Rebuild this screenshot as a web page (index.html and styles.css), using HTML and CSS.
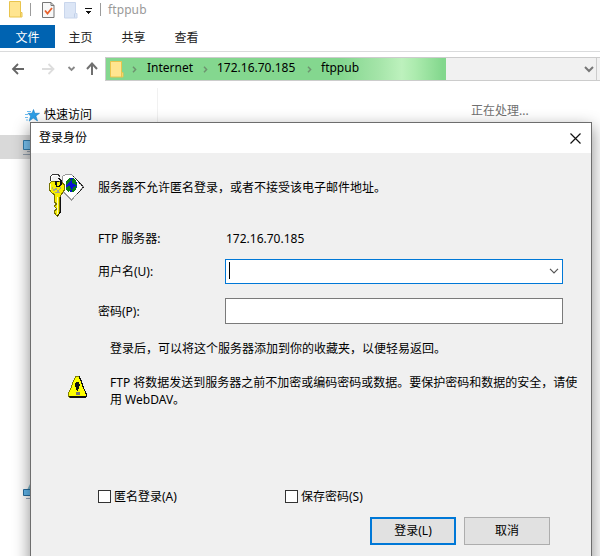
FILE: index.html
```html
<!DOCTYPE html>
<html lang="zh-CN">
<head>
<meta charset="utf-8">
<title>ftppub</title>
<link rel="stylesheet" href="styles.css">
</head>
<body>
<div class="window">
  <header class="titlebar">
    <svg class="folder" width="14" height="17" viewBox="0 0 14 17"><path d="M.5.5h11v11h1.500v4.500H.5z" fill="#ffe590" stroke="#e9c44d"/><path d="M11.500 11.500v4.500" stroke="#e9c44d" fill="none"/></svg>
    <i class="sep sep-a"></i>
    <svg class="props" width="13" height="16" viewBox="0 0 13 16"><path d="M.5.5h8.500l3 3v12H.5z" fill="#f8f8f8" stroke="#777"/><path d="M9 .5v3h3" fill="none" stroke="#777"/><path d="M3 8.500l2.500 3L10 6" fill="none" stroke="#e8612c" stroke-width="1.800"/></svg>
    <svg class="newfolder" width="14" height="17" viewBox="0 0 14 17"><path d="M.5.5h11v11h1.500v4.500H.5z" fill="#dce6f6" stroke="#c9d6ec"/><path d="M10.500 11.500v4" stroke="#c0cfe8" fill="none"/></svg>
    <svg class="qat" width="7" height="6" viewBox="0 0 7 6" shape-rendering="crispEdges"><path d="M0 0h7v1H0zM0 3h7L3.500 6z" fill="#111"/></svg>
    <i class="sep sep-b"></i>
    <span class="title">ftppub</span>
  </header>
  <nav class="tabs">
    <span class="tab file">文件</span><span class="tab">主页</span><span class="tab">共享</span><span class="tab">查看</span>
  </nav>
  <div class="navbar">
    <svg class="arrows" width="78" height="20" viewBox="0 0 78 20" fill="none" stroke-width="1.800"><path d="M24 10H13M18 5l-5 5 5 5" stroke="#666"/><path d="M42 10h11M48.500 5l5 5-5 5" stroke="#ddd"/><path d="M68.500 8l3 3 3-3" stroke="#888"/></svg>
    <svg class="up" width="12" height="14" viewBox="0 0 12 14" fill="none" stroke="#707070" stroke-width="2"><path d="M6 13V2M1 7l5-5.500L11 7"/></svg>
    <div class="address">
      <div class="progress">
        <svg class="folder" width="14" height="17" viewBox="0 0 14 17"><path d="M.5.5h11v11h1.500v4.500H.5z" fill="#ffe590" stroke="#e9c44d"/><path d="M11.500 11.500v4.500" stroke="#e9c44d" fill="none"/></svg>
        <svg class="chev c1" width="5" height="7" viewBox="0 0 5 7"><path d="M1 .8l2.600 2.700L1 6.200"/></svg>
        <span class="crumb internet">Internet</span>
        <svg class="chev c2" width="5" height="7" viewBox="0 0 5 7"><path d="M1 .8l2.600 2.700L1 6.200"/></svg>
        <span class="crumb host">172.16.70.185</span>
        <svg class="chev c3" width="5" height="7" viewBox="0 0 5 7"><path d="M1 .8l2.600 2.700L1 6.200"/></svg>
        <span class="crumb">ftppub</span>
      </div>
      <svg class="drop" width="10" height="7" viewBox="0 0 10 7" fill="none" stroke="#777" stroke-width="2"><path d="M1 1l4 4 4-4"/></svg>
    </div>
  </div>
  <div class="content">
    <aside class="tree">
      <div class="node quick">
        <svg width="15" height="13" viewBox="0 0 15 13"><path d="M8.500.5l1.300 3.800h4.700l-3.600 2.600 1.600 5-4.300-2.800-4 3 1.400-5L3 4.300h4z" fill="#2d9fe8" stroke="#1682ca" stroke-width=".6"/><path d="M2 2.500h4M0 5.500h3M0 8.500h3M1 11h2" stroke="#6cbcf0"/></svg>
        <span>快速访问</span>
      </div>
      <div class="node selected">
        <svg width="18" height="17" viewBox="0 0 18 17"><path d="M.5 1.500h17v9H.5z" fill="#79c4f3" stroke="#337dac"/><path d="M4 12.500h9M0 15.500h18" stroke="#8e9caa"/></svg>
      </div>
      <div class="node network">
        <svg width="18" height="15" viewBox="0 0 18 15"><path d="M7 0v5H4.500z" fill="#82b9cc"/><path d="M.5 5.500h16v6H.5z" fill="#62b8ee" stroke="#286e9e"/><path d="M3 14.500h12" stroke="#9aabc0"/></svg>
      </div>
    </aside>
    <main class="pane">正在处理...</main>
  </div>
</div>

<section class="dialog">
  <div class="caption"><span>登录身份</span>
    <svg width="11" height="11" viewBox="0 0 11 11"><path d="M.5.5l10 10M10.500.5l-10 10" stroke="#111" stroke-width="1.200"/></svg>
  </div>
  <div class="body">
    <div class="intro">
      <svg class="key" width="37" height="44" viewBox="0 0 37 44" shape-rendering="crispEdges">
        <path d="M14.500 3.500l3-2h6l12 12.500-12 13-8-8z" fill="#fff" stroke="#999"/>
        <path d="M25 3l10.500 11-6 7" fill="none" stroke="#222" stroke-dasharray="2 1"/>
        <ellipse cx="23.500" cy="12" rx="5.500" ry="7" fill="#0a12cf"/>
        <path d="M18 8l4-3 1 2-3 4-2 1zM25 5l3 3 1 4-4-1-1-3zM18 14l4-1 1 3-2 3-3-2zM25 14l4-1-2 5-3 1z" fill="#087d14"/>
        <path d="M2.500 8V4l2-2.500h5.500l2 2" fill="none" stroke="#333"/>
        <path d="M3.500 8V4l2-1.500h4" fill="none" stroke="#fff"/>
        <path d="M4 8.500h9l3 3v6l-3.500 5v17l-3 3.500H9l-2.500-3v-2l2-2-2-3 2-2-2-2v-7l-4-3.500-1.500-3v-5z" fill="#f8ee00" stroke="#777200"/>
        <path d="M2.500 11v6M9.500 24v17" stroke="#ffffb0"/>
        <path d="M11.500 24v15" stroke="#807800" fill="none"/>
        <path d="M12.500 24v15l-3 4" stroke="#111" fill="none"/>
        <path d="M4 14.500l2 3 2-2 2 3 3-4M7 19.500h5" stroke="#a5a58a" fill="none"/>
        <path d="M9.500 5.500h2l1.500 2v4l-1.500 2H9l-1-2v-3h3" fill="none" stroke="#111" stroke-width="1.500"/>
      </svg>
      <p>服务器不允许匿名登录，或者不接受该电子邮件地址。</p>
    </div>
    <div class="form">
      <span class="server-label">FTP 服务器:</span><span class="server">172.16.70.185</span>
      <label>用户名(U):</label>
      <div class="input combo"><i class="caret"></i><svg width="10" height="6" viewBox="0 0 10 6"><path d="M1 .8l4 4 4-4" fill="none" stroke="#555" stroke-width="1.200"/></svg></div>
      <label>密码(P):</label><div class="input password"></div>
    </div>
    <p class="hint">登录后，可以将这个服务器添加到你的收藏夹，以便轻易返回。</p>
    <div class="warning">
      <svg width="19" height="23" viewBox="0 0 19 23" shape-rendering="crispEdges"><path d="M8 .5h3l2 4 2 6 3 7v3l-2 1H2l-1.500-1v-3l3-7 2-6z" fill="#ff0" stroke="#807f00"/><path d="M11 .5l2 4 2 6 3 7v3l-2 1" fill="none" stroke="#111"/><path d="M1 20h17v2H2z" fill="#111"/><path d="M8 6h3l1 3-1 3-1 3H9l-1-3-1-3z" fill="#111"/><path d="M8 16h4v3H8z" fill="#777"/></svg>
      <p>FTP 将数据发送到服务器之前不加密或编码密码或数据。要保护密码和数据的安全，请使用 WebDAV。</p>
    </div>
    <div class="checks"><label><i class="box"></i>匿名登录(A)</label><label><i class="box"></i>保存密码(S)</label></div>
    <div class="buttons"><button class="primary">登录(L)</button><button>取消</button></div>
  </div>
</section>
</body>
</html>
```

FILE: styles.css
```css
* { box-sizing: border-box; }
body { margin: 0; width: 600px; height: 556px; overflow: hidden; background: #fff; color: #000; font: 12px/16px "Noto Sans", "Noto Sans CJK SC", sans-serif; position: relative; }
p { margin: 0; }
svg { display: block; flex: none; }
.window { height: 556px; display: flex; flex-direction: column; }
.titlebar { height: 25px; display: flex; align-items: flex-start; padding: 1px 0 0 9px; }
.sep { width: 1px; height: 13px; margin-top: 2px; background: #9b9b9b; }
.sep-a { margin-left: 7px; }
.props { margin: 1px 0 0 11px; }
.newfolder { margin: 1px 0 0 9px; }
.qat { margin: 7px 0 0 7px; }
.sep-b { margin-left: 8px; }
.title { color: #999; margin-left: 7px; line-height: 17px; letter-spacing: .1px; }
.tabs { height: 27px; display: flex; border-bottom: 1px solid #dadbdc; }
.tab { width: 53px; height: 23px; line-height: 25px; text-align: center; color: #222; }
.tab.file { width: 55px; margin-right: -1px; background: #0063b1; color: #fff; }
.navbar { height: 36px; display: flex; padding-top: 5px; }
.arrows { margin: 2px 8px 0 0; }
.up { margin: 5px 0 0; }
.address { flex: 1; height: 24px; margin-left: 7px; border: 1px solid #ccc; border-right: 0; background: #f1f1f1; display: flex; }
.progress { width: 340px; display: flex; align-items: center; padding-left: 4px; background: linear-gradient(90deg, #84d78f 0 69%, #a4e4a8 80%, #bdf1bd 87%, #acebae 91%, #83d78d 99%); white-space: nowrap; }
.crumb { margin-top: -2px; }
.chev { fill: none; stroke: #6d936f; stroke-width: 1.500; }
.c1 { margin: 0 10px 0 8px; }
.internet { width: 45px; }
.c2 { margin: 0 9px 0 11px; }
.host { width: 79px; }
.c3 { margin: 0 9px 0 11px; }
.drop { margin: 8px 0 0 138px; }
.address::after { content: ""; width: 1px; height: 22px; background: #ccc; margin-left: 2px; }
.content { flex: 1; display: flex; }
.tree { width: 158px; border-right: 1px solid #f1f1f1; padding-top: 14px; }
.node { display: flex; align-items: center; }
.quick { height: 26px; padding-left: 25px; gap: 4px; }
.selected { height: 24px; margin-top: 7px; padding-left: 23px; background: #d9d9d9; }
.network { height: 15px; margin-top: 325px; padding-left: 23px; }
.pane { padding: 15px 0 0 313px; color: #707070; }

.dialog { position: absolute; left: 30px; top: 122px; width: 562px; height: 460px; background: #f0f0f0; border: 1px solid #6d6d6d; box-shadow: 0 6px 15px 1px rgba(0,0,0,.42); }
.caption { height: 30px; padding: 0 10px 0 8px; background: #fff; display: flex; align-items: center; justify-content: space-between; }
.body { padding-top: 20px; }
.intro { height: 55px; display: flex; padding-left: 17px; }
.intro p { margin: 7px 0 0 13px; }
.form { display: grid; grid-template-columns: 127px 338px; grid-template-rows: 22px 40px 39px; align-items: center; padding-left: 67px; }
.form label { padding-top: 4px; }
.server { padding-left: 1px; }
.input { height: 26px; border: 1px solid #7a7a7a; background: #fff; }
.combo { height: 25px; margin-top: 2px; border-color: #0078d7; padding: 0 3px; display: flex; align-items: center; justify-content: space-between; }
.password { margin-top: 2px; }
.caret { width: 1px; height: 17px; margin-top: -2px; background: #000; }
.hint { margin: 12px 0 0 79px; }
.warning { display: flex; margin: 17px 0 0 37px; gap: 23px; }
.warning svg { margin-top: 2px; }
.warning p { width: 472px; line-height: 17px; }
.checks { display: flex; margin: 81px 0 0 67px; }
.checks label { width: 187px; display: flex; align-items: center; gap: 3px; }
.box { width: 13px; height: 13px; margin-top: -1px; border: 1px solid #333; background: #fff; }
.buttons { display: flex; gap: 8px; margin: 12px 0 0 339px; }
button { width: 86px; height: 28px; padding: 0; border: 1px solid #adadad; background: #e1e1e1; color: #000; font: inherit; }
.primary { border: 2px solid #0078d7; }
```
